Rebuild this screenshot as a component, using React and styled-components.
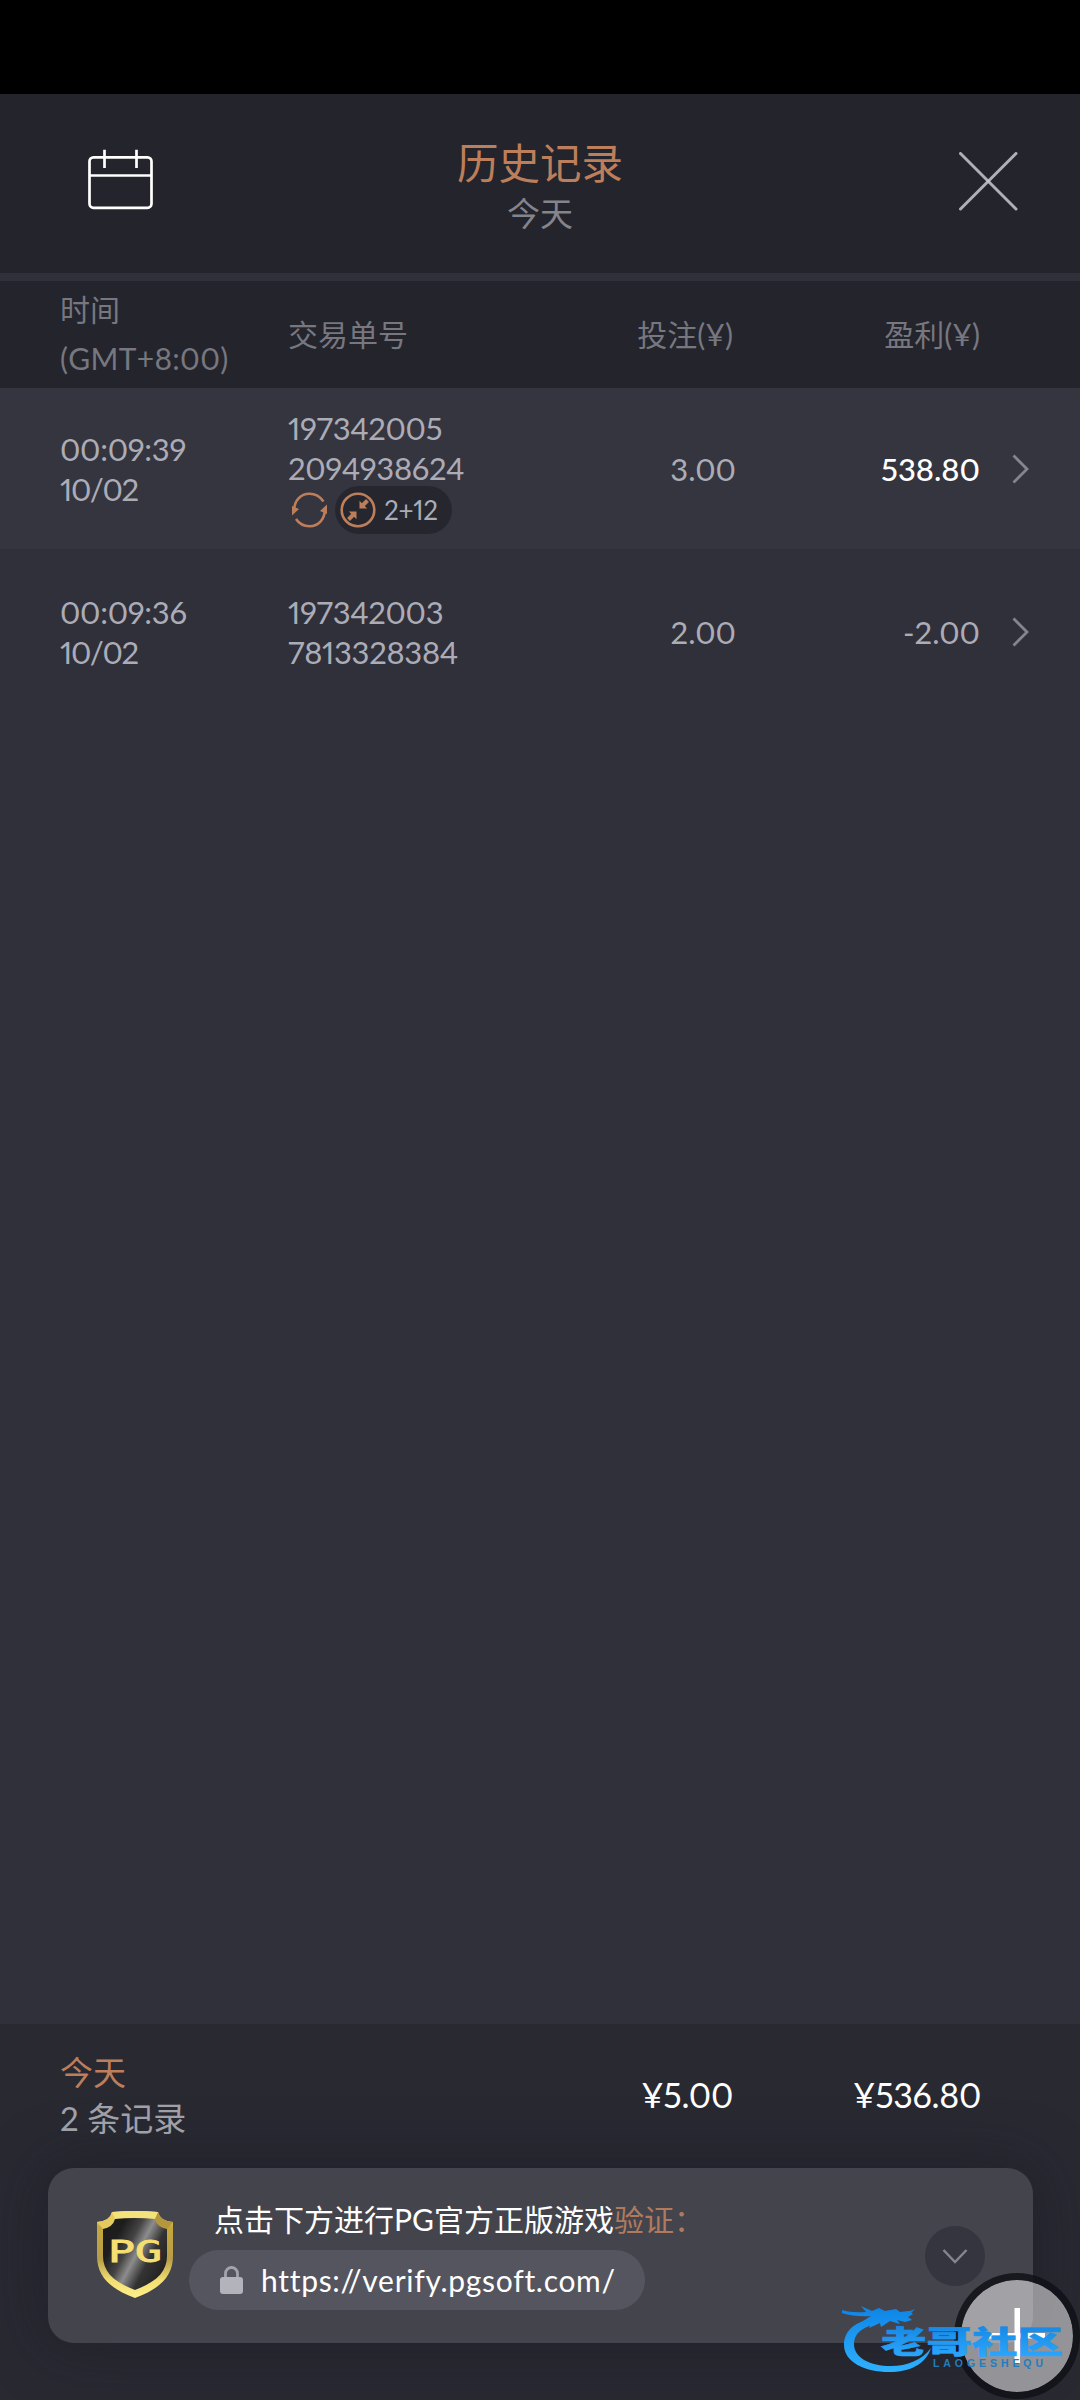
import React from 'react';
import styled, { createGlobalStyle } from 'styled-components';

const GlobalStyle = createGlobalStyle`
  * {
    box-sizing: border-box;
  }

  body {
    margin: 0;
    background: #30303b;
  }
`;

// Page shell
const Page = styled.div`
  position: relative;
  width: 1080px;
  height: 2400px;
  display: flex;
  flex-direction: column;
  overflow: hidden;
  background: #30303b;
  color: #acacb6;
  font-family: Lato, 'Noto Sans CJK SC', sans-serif;
  font-size: 30px;
  font-variant-numeric: proportional-nums;
  white-space: nowrap;
`;

const StatusBar = styled.div`
  height: 94px;
  background: #000;
`;

const Header = styled.header`
  height: 187px;
  display: grid;
  grid-template-columns: 150px 1fr 150px;
  padding: 0 62px 8px;
  background: #24242d;
  border-bottom: 8px solid #30303a;
`;

const IconButton = styled.button`
  display: flex;
  align-self: start;
  justify-content: ${(props) => (props.$end ? 'flex-end' : 'flex-start')};
  padding: ${(props) => (props.$end ? '58px 0 0' : '54px 0 0 24px')};
  border: 0;
  background: none;
`;

const HeaderTitles = styled.div`
  display: flex;
  flex-direction: column;
  align-items: center;
  padding-top: 40px;
`;

const PageTitle = styled.h1`
  margin: 0;
  color: #bd7f5b;
  font-size: 41.5px;
  font-weight: 400;
  line-height: 58px;
`;

const PageSubtitle = styled.div`
  color: #84848c;
  font-size: 33px;
  line-height: 42px;
`;

// History table
const TableRow = styled.div`
  display: grid;
  grid-template-columns: 228px 249px 199px 244px 1fr;
  align-items: center;
  height: ${(props) => props.$height}px;
  padding-left: 60px;
  background: ${(props) => props.$bg || 'transparent'};
`;

const HeadCell = styled.div`
  margin-top: -1px;
  padding-right: ${(props) => props.$inset || 0}px;
  color: #77777f;
  font-size: 30px;
  line-height: 49px;
  text-align: ${(props) => (props.$right ? 'right' : 'left')};
`;

const Timezone = styled.span`
  letter-spacing: 0.3px;
`;

const Cell = styled.div`
  color: ${(props) => (props.$win ? '#fff' : '#acacb6')};
  font-size: 31px;
  font-weight: ${(props) => (props.$win ? 500 : 400)};
  line-height: 40px;
  letter-spacing: ${(props) => (props.$right ? 0 : '-0.3px')};
  text-align: ${(props) => (props.$right ? 'right' : 'left')};
`;

const DateText = styled.span`
  letter-spacing: -1.3px;
`;

const Badges = styled.div`
  display: flex;
  align-items: center;
  gap: 8px;
  height: 42px;
  padding: 3px 0 0 4px;
`;

const ComboBadge = styled.div`
  display: flex;
  align-items: center;
  gap: 8px;
  width: 117px;
  height: 48px;
  padding-left: 5px;
  border-radius: 24px;
  background: #26262e;
  color: #acacb6;
  font-size: 26px;
  line-height: 48px;
`;

const Arrow = styled.div`
  display: flex;
  padding-left: 32px;
`;

const TableBody = styled.main`
  flex: 1;
`;

// Footer with totals and the verification card
const Footer = styled.footer`
  height: 376px;
  background: #292932;
`;

const Summary = styled.div`
  display: grid;
  grid-template-columns: 476px 197px 248px 1fr;
  align-items: center;
  height: 144px;
  padding: 0 0 2px 60px;
`;

const SummaryPeriod = styled.div`
  color: #bd7f5b;
  font-size: 33px;
  line-height: 46px;
`;

const SummaryCount = styled.div`
  color: #a0a0a8;
  font-size: 33px;
  line-height: 46px;
`;

const Total = styled.div`
  margin-top: -1px;
  color: #fff;
  font-size: 34px;
  letter-spacing: -0.3px;
  text-align: right;
`;

const VerifyCard = styled.section`
  display: flex;
  width: 985px;
  height: 175px;
  margin-left: 48px;
  padding-left: 48px;
  border-radius: 26px;
  background: #44444d;
  box-shadow: 0 0 60px rgba(24, 24, 34, 0.5);
`;

const ShieldBox = styled.div`
  width: 93px;
  padding-top: 43px;
`;

const VerifyBody = styled.div`
  flex: 1;
`;

const VerifyText = styled.p`
  margin: 28px 0 0 25px;
  color: #fff;
  font-size: 30px;
  line-height: 46px;
`;

const Accent = styled.span`
  color: #b07a5e;
`;

const UrlPill = styled.div`
  display: flex;
  align-items: center;
  gap: 18px;
  width: 456px;
  height: 60px;
  margin-top: 8px;
  padding-left: 31px;
  border-radius: 30px;
  background: #555560;
  color: #fff;
  font-size: 30px;
  letter-spacing: 0.7px;
`;

const ExpandButton = styled.button`
  display: flex;
  align-items: center;
  justify-content: center;
  width: 60px;
  height: 60px;
  margin: 58px 48px 0 0;
  padding: 0;
  border: 0;
  border-radius: 50%;
  background: #35353f;
`;

// Floating button and watermark lie over the footer
const FloatingButton = styled.button`
  position: absolute;
  right: 0;
  bottom: 1px;
  display: flex;
  align-items: center;
  justify-content: center;
  width: 126px;
  height: 126px;
  padding: 0;
  border: 7px solid rgba(17, 17, 24, 0.85);
  border-radius: 50%;
  background: rgba(255, 255, 255, 0.5);
  background-clip: padding-box;
`;

const Watermark = styled.svg`
  position: absolute;
  left: 838px;
  top: 2300px;
`;

const CalendarIcon = () => (
  <svg width="69" height="64" viewBox="0 0 69 64" fill="none" stroke="#fff" strokeWidth="2.7">
    <rect x="3.5" y="9.3" width="62" height="50.5" rx="4" />
    <path d="M3.5 27.5H65.5M18.5 1.8V20M50.5 1.8V20" />
  </svg>
);

const CloseIcon = () => (
  <svg width="59" height="59" viewBox="0 0 59 59" stroke="#c8c8cf" strokeOpacity="0.85" strokeWidth="3" strokeLinecap="round">
    <line x1="1.5" y1="1.5" x2="57" y2="57" />
    <line x1="57" y1="1.5" x2="1.5" y2="57" />
  </svg>
);

const SpinIcon = () => (
  <svg width="35" height="36" viewBox="0 0 35 36" fill="none" stroke="#bd7f5b" strokeWidth="2.6">
    <path d="M2.2 19C1.8 9 8.5 1.8 17.5 1.8C23.5 1.8 28 4.5 31.5 9.5" />
    <path d="M32.8 17C33.2 27 26.5 34.2 17.5 34.2C11.5 34.2 7 31.5 4 27" />
    <path d="M0 14V23.5L7 17ZM35 22V12.5L28 19Z" fill="#bd7f5b" stroke="none" />
  </svg>
);

const MergeIcon = () => (
  <svg width="36" height="36" viewBox="0 0 36 36" fill="none" stroke="#bd7f5b">
    <circle cx="18" cy="18" r="16.3" strokeWidth="2.6" />
    <path d="M27.5 8.5L22.5 13.5M8.5 27.5L13.5 22.5" strokeWidth="4" />
    <path d="M19.5 8.8V16.5H27.2ZM16.5 27.2V19.5H8.8Z" fill="#bd7f5b" stroke="none" />
  </svg>
);

const ChevronRight = () => (
  <svg width="18" height="30" viewBox="0 0 18 30" fill="none" stroke="#85858e" strokeWidth="2.8">
    <path d="M1.5 1.5L15 15L1.5 28.5" />
  </svg>
);

const ChevronDown = () => (
  <svg width="26" height="16" viewBox="0 0 26 16" fill="none" stroke="#85858e" strokeWidth="2.5">
    <path d="M1.5 2L13 14L24.5 2" />
  </svg>
);

const LockIcon = () => (
  <svg width="23" height="28" viewBox="0 0 23 28">
    <path d="M5.5 13V7.5a6 6 0 0 1 12 0V13" fill="none" stroke="#a3a3ad" strokeWidth="2.8" />
    <rect x="0" y="11" width="23" height="17" rx="3" fill="#b3b3bc" />
  </svg>
);

const ShieldLogo = () => (
  <svg width="78" height="88" viewBox="0 0 78 88">
    <defs>
      <linearGradient id="gold" x1="0" y1="0" x2="0" y2="1">
        <stop offset="0" stopColor="#f5e483" />
        <stop offset="0.18" stopColor="#c5a83b" />
        <stop offset="0.55" stopColor="#b79d49" />
        <stop offset="0.8" stopColor="#f3df72" />
        <stop offset="1" stopColor="#fff18c" />
      </linearGradient>
      <linearGradient id="steel" x1="0" y1="0.15" x2="1" y2="0.75">
        <stop offset="0.2" stopColor="#1d1d1d" />
        <stop offset="0.4" stopColor="#444" />
        <stop offset="0.54" stopColor="#8c8c8c" />
        <stop offset="0.72" stopColor="#333" />
        <stop offset="1" stopColor="#1f1f1f" />
      </linearGradient>
    </defs>
    <path
      d="M16 1Q39 -1 62 1Q64 10 77 11V45C77 65 64 78 39 87C14 78 1 65 1 45V11Q14 10 16 1Z"
      fill="url(#gold)"
    />
    <path d="M16 1Q39 -1 62 1L59 8Q39 6 19 8Z" fill="#f4e27c" />
    <path d="M1 11Q14 10 16 1L19 8Q17 17 7 18Z" fill="#e4cb60" />
    <path d="M77 11Q64 10 62 1L59 8Q61 17 71 18Z" fill="#b5983c" />
    <path
      d="M19 8Q39 6 59 8Q61 16 71 18V45C71 61 60 71 39 79C18 71 7 61 7 45V18Q17 16 19 8Z"
      fill="url(#steel)"
    />
    <text
      x="12"
      y="51"
      textLength="54"
      lengthAdjust="spacingAndGlyphs"
      fill="#f5df72"
      stroke="#f5df72"
      strokeWidth="0.9"
      fontFamily="'DejaVu Sans Mono', monospace"
      fontSize="30"
    >
      PG
    </text>
  </svg>
);

const PlusIcon = () => (
  <svg width="56" height="56" viewBox="0 0 56 56" fill="#fff">
    <rect x="25.5" y="0" width="5.5" height="55" />
    <rect x="0" y="25" width="56" height="5.5" />
  </svg>
);

const DragonWatermark = () => (
  <Watermark width="230" height="78" viewBox="0 0 230 78">
    <defs>
      <linearGradient id="wave" gradientUnits="userSpaceOnUse" x1="0" y1="5" x2="0" y2="74">
        <stop offset="0" stopColor="#0c83e6" />
        <stop offset="1" stopColor="#2fb2ff" />
      </linearGradient>
      <linearGradient id="ink" x1="0" y1="0" x2="0" y2="1">
        <stop offset="0" stopColor="#1082e0" />
        <stop offset="1" stopColor="#2fabff" />
      </linearGradient>
    </defs>
    <g fill="url(#wave)">
      <path d="M34 19C14 22 6 33 6 45C6 62 27 72 51 72C72 72 88 64 93 48C84 60 69 66 53 66C32 66 16 58 16 44C16 34 23 28 37 24Z" />
      <path d="M4 10Q13 13 28 12L23 6L34 11L41 8L47 11L58 9L62 12L71 11L75 14L70 17L74 20L67 22L59 20L62 24L52 21L43 27L42 23L31 28L33 23L19 28L25 21L33 16Q17 17 4 13Z" />
      <path d="M60 13Q70 12 77 9L70 16Z" />
    </g>
    <text
      transform="translate(43 53) scale(1 0.67)"
      textLength="182"
      lengthAdjust="spacingAndGlyphs"
      fill="url(#ink)"
      stroke="url(#ink)"
      strokeWidth="0.8"
      fontFamily="'Noto Sans CJK SC', sans-serif"
      fontWeight="900"
      fontSize="45"
    >
      老哥社区
    </text>
    <text
      x="95"
      y="67"
      textLength="110"
      fill="#247cbc"
      fontFamily="'Liberation Sans', sans-serif"
      fontWeight="700"
      fontSize="10.5"
    >
      LAOGESHEQU
    </text>
  </Watermark>
);

const records = [
  {
    time: '00:09:39',
    date: '10/02',
    order: ['197342005', '2094938624'],
    bet: '3.00',
    profit: '538.80',
    win: true,
    combo: '2+12',
    height: 161,
    bg: '#35353f'
  },
  {
    time: '00:09:36',
    date: '10/02',
    order: ['197342003', '7813328384'],
    bet: '2.00',
    profit: '-2.00',
    height: 165
  }
];

// Single line of the history table
const RecordRow = ({ time, date, order, bet, profit, win, combo, height, bg }) => (
  <TableRow $height={height} $bg={bg}>
    <Cell>
      {time}
      <br />
      <DateText>{date}</DateText>
    </Cell>
    <Cell>
      {order[0]}
      <br />
      {order[1]}
      {combo && (
        <Badges>
          <SpinIcon />
          <ComboBadge>
            <MergeIcon />
            {combo}
          </ComboBadge>
        </Badges>
      )}
    </Cell>
    <Cell $right>{bet}</Cell>
    <Cell $right $win={win}>{profit}</Cell>
    <Arrow>
      <ChevronRight />
    </Arrow>
  </TableRow>
);

const App = () => {
  return (
    <Page>
      <GlobalStyle />
      <StatusBar />
      <Header>
        <IconButton aria-label="calendar">
          <CalendarIcon />
        </IconButton>
        <HeaderTitles>
          <PageTitle>历史记录</PageTitle>
          <PageSubtitle>今天</PageSubtitle>
        </HeaderTitles>
        <IconButton $end aria-label="close">
          <CloseIcon />
        </IconButton>
      </Header>
      <TableRow $height={107} $bg="#24242d">
        <HeadCell>
          时间
          <br />
          <Timezone>(GMT+8:00)</Timezone>
        </HeadCell>
        <HeadCell>交易单号</HeadCell>
        <HeadCell $right $inset={3}>投注(¥)</HeadCell>
        <HeadCell $right>盈利(¥)</HeadCell>
      </TableRow>
      <TableBody>
        {records.map((record) => (
          <RecordRow key={record.time} {...record} />
        ))}
      </TableBody>
      <Footer>
        <Summary>
          <div>
            <SummaryPeriod>今天</SummaryPeriod>
            <SummaryCount>2 条记录</SummaryCount>
          </div>
          <Total>¥5.00</Total>
          <Total>¥536.80</Total>
        </Summary>
        <VerifyCard>
          <ShieldBox>
            <ShieldLogo />
          </ShieldBox>
          <VerifyBody>
            <VerifyText>
              点击下方进行PG官方正版游戏<Accent>验证：</Accent>
            </VerifyText>
            <UrlPill>
              <LockIcon />
              https://verify.pgsoft.com/
            </UrlPill>
          </VerifyBody>
          <ExpandButton aria-label="expand">
            <ChevronDown />
          </ExpandButton>
        </VerifyCard>
      </Footer>
      <FloatingButton aria-label="add">
        <PlusIcon />
      </FloatingButton>
      <DragonWatermark />
    </Page>
  );
};

export default App;
